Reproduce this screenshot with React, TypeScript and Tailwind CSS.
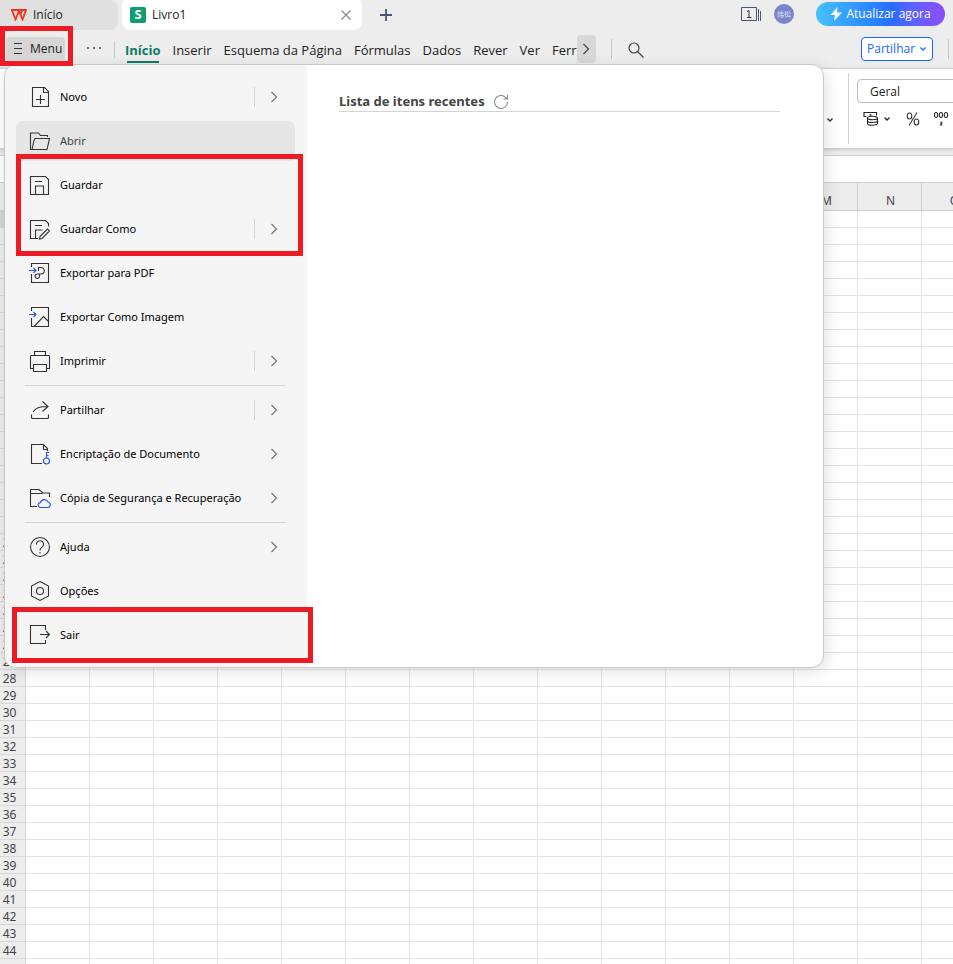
import type { ReactNode } from 'react';

const columns = 'ABCDEFGHIJKLMNO'.split('');
const rows = Array.from({ length: 44 }, (_, i) => i + 1);
const ribbonTabs = ['Inserir', 'Esquema da Página', 'Fórmulas', 'Dados', 'Rever', 'Ver', 'Ferr'];

function Icon({ children }: { children: ReactNode }) {
  return (
    <svg className="w-5 h-5 shrink-0 overflow-visible" viewBox="0 0 20 20" fill="none" stroke="#333" strokeWidth={1.1} aria-hidden="true">
      {children}
    </svg>
  );
}

function Chevron({ className }: { className: string }) {
  return (
    <svg className={className} viewBox="0 0 8 12" fill="none" stroke="currentColor" strokeWidth={1.2} aria-hidden="true">
      <path d="M1.5 1 6.5 6l-5 5" />
    </svg>
  );
}

function Caret({ className }: { className: string }) {
  return (
    <svg className={className} viewBox="0 0 6 4" fill="none" stroke="currentColor" strokeWidth={1.3} aria-hidden="true">
      <path d="M.5.5 3 3 5.5.5" />
    </svg>
  );
}

const icons = {
  novo: (
    <Icon>
      <path d="M2.5.5h12l4 4v15h-16zM13.5.5v5h5M10.5 8v9M6 12.5h9" />
    </Icon>
  ),
  abrir: (
    <Icon>
      <path d="M17.5 6V4.5h-7l-2-2.500h-8v16.500h16.500l2.500-11h-14.500l-1 2-2 9" />
    </Icon>
  ),
  guardar: (
    <Icon>
      <path d="M.5 1.5h15l3 3v15h-18zM5 6.5h7M5.5 19.5v-8.500h8v8.500" />
    </Icon>
  ),
  guardarComo: (
    <Icon>
      <path d="M8 19.5H.5v-18h15l3 3v3M5 6.5h7M5.5 19.5v-8.500h7M10 17.5l7.500-7.500 2 2-7.500 7.500-2.500.5z" />
    </Icon>
  ),
  pdf: (
    <Icon>
      <path d="M1.5 4V.5h17v19h-17v-8.500M8.5 8V4.500H11a3 3 0 0 1 0 6.500H7.500a2.200 2.200 0 1 0 2 2.200V11" />
      <path d="M-1 7.5h6.500M3.500 5 6 7.5 3.500 10" stroke="#2456e6" />
    </Icon>
  ),
  imagem: (
    <Icon>
      <path d="M1.5 4V.5h17v19h-17v-8.500M4 19.5l9.500-10 5 5" />
      <path d="M-1 7.5h6.500M3.500 5 6 7.5 3.500 10" stroke="#2456e6" />
    </Icon>
  ),
  imprimir: (
    <Icon>
      <path d="M4.5 4.5v-4h11v4M3.500 17.5h-3V5.5q0-1 1-1h17q1 0 1 1v12h-3M3.500 13.5h13v7h-13z" />
    </Icon>
  ),
  partilhar: (
    <Icon>
      <path d="M1.5 14.5v3q0 1 1 1h15q1 0 1-1v-3M3 12C5.5 8 9 6.5 18 6.5M12.5 1.5l5.500 5-5.500 5" />
    </Icon>
  ),
  encriptar: (
    <Icon>
      <path d="M12 19.5H1.5V.5h12l4 4V7M13.5.5v5h4" />
      <path d="M16.5 14V8.5h2.500M16.5 11.5h2" stroke="#2456e6" />
      <circle cx="16.5" cy="17" r="3" stroke="#2456e6" />
    </Icon>
  ),
  copia: (
    <Icon>
      <path d="M7 18.5H.5v-17H9l4 3.500h6.500V9M.5 5.5h12" />
      <path d="M11 19.5a2.500 2.500 0 0 1-.5-5 4 4 0 0 1 7.500-.5 2.800 2.800 0 0 1 0 5.500z" stroke="#2456e6" />
    </Icon>
  ),
  ajuda: (
    <Icon>
      <circle cx="10" cy="10" r="9.500" />
      <path d="M6.500 7.5a3.500 3.500 0 1 1 5.500 2.600Q10 11.500 10 13.500M10 15v1.500" />
    </Icon>
  ),
  opcoes: (
    <Icon>
      <path d="m10 .5 8.500 4.500v10l-8.500 4.500-8.500-4.500V5z" />
      <circle cx="10" cy="10" r="3.500" />
    </Icon>
  ),
  sair: (
    <Icon>
      <path d="M15.5 5V.5H.5v18h15V15M10 9.5h9.500M16 6l3.500 3.500L16 13" />
    </Icon>
  ),
};

type ItemProps = { icon: ReactNode; label: string; arrow?: boolean; split?: boolean; active?: boolean };

function MenuItem({ icon, label, arrow, split, active }: ItemProps) {
  return (
    <button className={`flex items-center w-full h-10 pl-3.5 pr-[17px] rounded-md text-left ${active ? 'bg-[#e6e6e6] text-[#444]' : 'text-black'}`}>
      {icon}
      <span className="ml-2.5 flex-1 whitespace-nowrap">{label}</span>
      {split && <span className="w-px h-5 bg-[#d4d4d4] mr-[15px]" />}
      {(arrow || split) && <Chevron className="w-2 h-3 text-[#777]" />}
    </button>
  );
}

function Divider() {
  return <hr className="mx-[9px] border-0 h-px bg-[#d4d4d4]" />;
}

function TitleBar() {
  return (
    <header className="flex items-start h-[30px] text-[12px] text-[#222]">
      <button className="flex items-center gap-1.5 w-[118px] h-[30px] pl-[11px] bg-[#e0e0e0] rounded-r-lg">
        <svg className="w-4 h-3" viewBox="0 0 16 12" fill="none" stroke="#f5331e" strokeWidth={1.8} aria-hidden="true">
          <path d="M0 1h11.5L9.5 5.5M1 1l3.500 9.500L8 2l3.500 8.500L15 1H12" />
        </svg>
        Início
      </button>
      <div className="flex items-center w-60 h-[30px] ml-1 px-2 bg-white rounded-b-lg rounded-t-sm">
        <span className="flex items-center justify-center w-4 h-4 rounded-xs bg-[#0e9d6b] text-white text-[13px] font-bold">S</span>
        <span className="ml-1.5 flex-1">Livro1</span>
        <button aria-label="Fechar separador">
          <svg className="w-2.5 h-2.5 mr-[3px]" viewBox="0 0 10 10" stroke="#888" strokeWidth={1.1} aria-hidden="true">
            <path d="m.5.5 9 9m0-9-9 9" />
          </svg>
        </button>
      </div>
      <button aria-label="Novo separador" className="ml-[18px] mt-[9px]">
        <svg className="w-3 h-3" viewBox="0 0 12 12" stroke="#4a5676" strokeWidth={1.8} aria-hidden="true">
          <path d="M6 0v12M0 6h12" />
        </svg>
      </button>
      <div className="flex items-start ml-auto pr-2">
        <button aria-label="Janelas" className="mt-[7px]">
          <svg className="w-5 h-3.5" viewBox="0 0 20 14" fill="none" stroke="#4a5676" aria-hidden="true">
            <path d="M.5.5h15v13H.5zM17.5 2v12M19.5 4v10" />
            <path d="m6 4.500 2-1v7M6 10.500h4.500" stroke="#333" />
          </svg>
        </button>
        <button className="flex items-center justify-center w-5 h-5 ml-[13px] mt-1 rounded-full bg-[#7986cb] text-white/80 text-[7px] font-['Noto_Sans_CJK_SC',sans-serif]">炜彸</button>
        <button className="flex items-center justify-center gap-1 w-[129px] h-6 ml-[22px] mt-0.5 rounded-full text-white whitespace-nowrap bg-linear-to-r from-[#48c1ff] via-[#286bff] via-60% to-[#8b4dff]">
          <svg className="w-3 h-3.5" viewBox="0 0 12 14" fill="currentColor" aria-hidden="true">
            <path d="M7.5 0 .5 8h4.500l-1 6 8-8.500H7z" />
          </svg>
          Atualizar agora
        </button>
      </div>
    </header>
  );
}

function RibbonTabs() {
  return (
    <nav className="flex items-start h-[38px] pl-1.5 text-[13px] text-[#222] whitespace-nowrap">
      <div className="relative z-20 mt-[7px]">
        <button className="flex items-center gap-2 w-[59px] h-6 pl-2 rounded bg-[#d6d6d6] text-[12px]">
          <svg className="w-2 h-3 shrink-0" viewBox="0 0 8 12" stroke="#333" aria-hidden="true">
            <path d="M0 .5h8M0 5.5h8M0 10.5h8" />
          </svg>
          Menu
        </button>
        <span className="absolute -left-1.5 -right-2 -top-[11px] -bottom-[5px] border-5 border-[#ed1c24] pointer-events-none" />
      </div>
      <button aria-label="Mais" className="flex items-center gap-1 h-5 mt-2 ml-[22px]">
        <i className="w-0.5 h-0.5 rounded-full bg-[#444]" />
        <i className="w-0.5 h-0.5 rounded-full bg-[#444]" />
        <i className="w-0.5 h-0.5 rounded-full bg-[#444]" />
      </button>
      <span className="w-px h-[17px] mt-[11px] ml-[13px] bg-[#c8c8c8]" />
      <button className="relative ml-2.5 mt-[9px] h-6 text-[#0a7d62] font-bold">
        Início
        <span className="absolute inset-x-0.5 bottom-0 h-0.5 bg-[#0a7d62]" />
      </button>
      {ribbonTabs.map((tab) => (
        <button key={tab} className="ml-3 mt-[9px] h-6">{tab}</button>
      ))}
      <button aria-label="Mais separadores" className="flex items-center justify-center w-[19px] h-7 mt-[5px] rounded bg-[#d8d8d8]">
        <Chevron className="w-2 h-3 text-[#444]" />
      </button>
      <span className="w-px h-5 mt-[9px] ml-[15px] bg-[#c8c8c8]" />
      <button aria-label="Procurar" className="ml-4 mt-3">
        <svg className="w-4 h-4" viewBox="0 0 16 16" fill="none" stroke="#444" strokeWidth={1.2} aria-hidden="true">
          <circle cx="6" cy="6" r="5" />
          <path d="m9.500 9.500 6 6" />
        </svg>
      </button>
      <button className="flex items-center justify-between w-[72px] h-6 mt-[7px] ml-auto pl-[5px] pr-1.5 bg-white border border-[#1a66ff] rounded text-[12px] text-[#1a66ff]">
        Partilhar
        <Caret className="w-1.5 h-1" />
      </button>
      <span className="w-px h-5 mt-[9px] ml-[15px] mr-1 bg-[#c8c8c8]" />
    </nav>
  );
}

function Toolbar() {
  return (
    <div className="relative flex justify-end h-[81px] bg-white border-y border-[#cfcfcf] shadow-[0_1px_3px_rgba(0,0,0,0.15)] text-[12px]">
      <button aria-label="Mais opções" className="flex items-center h-4 mt-[43px] mr-[15px]">
        <Caret className="w-1.5 h-1 text-[#333]" />
      </button>
      <div className="w-[105px] h-[71px] mt-1 border-l border-[#d4d4d4] pl-2 overflow-hidden">
        <input aria-label="Formato numérico" defaultValue="Geral" className="block w-32 h-6 mt-1.5 pl-3 border border-[#bbb] rounded bg-white text-[#222]" />
        <div className="flex items-center h-6 mt-1 pl-[7px] text-[#222]">
          <button aria-label="Moeda" className="flex items-center gap-1.5">
            <svg className="w-3.5 h-3.5 overflow-visible" viewBox="0 0 14 14" fill="none" stroke="#222" strokeWidth={1.1} aria-hidden="true">
              <path d="M2.500 4.500H0V.5h12.500v3" />
              <ellipse cx="8.500" cy="6" rx="5" ry="1.700" />
              <path d="M3.500 6v5.500c0 2.300 10 2.300 10 0V6M3.500 8.700c0 2.300 10 2.300 10 0" />
              <circle cx="6.500" cy="3" r=".4" />
            </svg>
            <Caret className="w-1.5 h-1" />
          </button>
          <button aria-label="Percentagem" className="ml-4">
            <svg className="w-3.5 h-3.5" viewBox="0 0 14 14" fill="none" stroke="#333" strokeWidth={1.1} aria-hidden="true">
              <ellipse cx="3.500" cy="4" rx="2.300" ry="3" />
              <ellipse cx="10.500" cy="10" rx="2.300" ry="3" />
              <path d="M11 .5 3 13.500" />
            </svg>
          </button>
          <button aria-label="Separador de milhares" className="ml-[13px]">
            <svg className="w-4 h-3.5" viewBox="0 0 16 14" fill="none" stroke="#333" strokeWidth={1.1} aria-hidden="true">
              <ellipse cx="3" cy="3" rx="1.700" ry="2.500" />
              <ellipse cx="8" cy="3" rx="1.700" ry="2.500" />
              <ellipse cx="13" cy="3" rx="1.700" ry="2.500" />
              <path d="M7.500 10.500h1v1.500l-1 1.500" strokeWidth={1.6} />
            </svg>
          </button>
        </div>
      </div>
    </div>
  );
}

function Sheet() {
  return (
    <table className="table-fixed w-[986px] border-separate border-spacing-0 text-[12px] leading-4 text-[#444] font-['Noto_Sans',sans-serif]">
      <thead>
        <tr className="h-7 bg-[#ededed]">
          <th aria-label="Selecionar tudo" className="w-[26px] p-0 border-r border-b border-[#cfcfcf]" />
          {columns.map((c) => (
            <th key={c} scope="col" className="w-16 p-0 pt-2 pl-0.5 font-normal border-r border-b border-[#cfcfcf]">{c}</th>
          ))}
        </tr>
      </thead>
      <tbody>
        {rows.map((n) => (
          <tr key={n} className="h-[17px]">
            <th scope="row" className={`p-0 pt-0.5 pr-1.5 font-normal leading-[14px] border-r border-b border-[#d8d8d8] ${n === 1 ? 'bg-[#d4d4d4]' : 'bg-[#ededed]'}`}>{n}</th>
            {columns.map((c) => (
              <td key={c} className="p-0 border-r border-b border-[#e3e3e3] bg-white" />
            ))}
          </tr>
        ))}
        {/* partly scrolled-out row */}
        <tr className="h-[17px]">
          <td className="p-0 border-r border-[#d8d8d8] bg-[#ededed]" />
          {columns.map((c) => (
            <td key={c} className="p-0 border-r border-[#e3e3e3] bg-white" />
          ))}
        </tr>
      </tbody>
    </table>
  );
}

function FileMenu() {
  return (
    <div className="absolute z-10 left-1 top-16 flex w-[820px] max-w-full h-[604px] rounded-xl border border-[#c8c8c8] bg-white shadow-[2px_4px_16px_rgba(0,0,0,0.12)] text-[11px] font-['Noto_Sans',sans-serif]">
      <div className="flex flex-col gap-1 w-[302px] shrink-0 pt-3 pl-[11px] pr-3 rounded-l-xl bg-[#f5f5f5]">
        <MenuItem icon={icons.novo} label="Novo" split />
        <MenuItem icon={icons.abrir} label="Abrir" active />
        <div className="relative flex flex-col gap-1">
          <MenuItem icon={icons.guardar} label="Guardar" />
          <MenuItem icon={icons.guardarComo} label="Guardar Como" split />
          <span className="absolute left-0 -right-2 -top-[11px] -bottom-[7px] border-5 border-[#ed1c24] pointer-events-none" />
        </div>
        <MenuItem icon={icons.pdf} label="Exportar para PDF" />
        <MenuItem icon={icons.imagem} label="Exportar Como Imagem" />
        <MenuItem icon={icons.imprimir} label="Imprimir" split />
        <Divider />
        <MenuItem icon={icons.partilhar} label="Partilhar" split />
        <MenuItem icon={icons.encriptar} label="Encriptação de Documento" arrow />
        <MenuItem icon={icons.copia} label="Cópia de Segurança e Recuperação" arrow />
        <Divider />
        <MenuItem icon={icons.ajuda} label="Ajuda" arrow />
        <MenuItem icon={icons.opcoes} label="Opções" />
        <div className="relative">
          <MenuItem icon={icons.sair} label="Sair" />
          <span className="absolute -left-1 -right-[18px] -inset-y-2 border-5 border-[#ed1c24] pointer-events-none" />
        </div>
      </div>
      <section className="flex-1 pl-8 pr-[43px] pt-[27px]">
        <div className="flex items-center gap-2 h-5 border-b border-[#d4d4d4]">
          <h2 className="text-[13px] font-bold text-[#444]">Lista de itens recentes</h2>
          <button aria-label="Atualizar lista">
            <svg className="w-4 h-4" viewBox="0 0 16 16" fill="none" stroke="#888" strokeWidth={1.1} aria-hidden="true">
              <path d="M14.500 8A6.500 6.500 0 1 1 12.500 3.300L14.500 5M14.500 1v4h-4" />
            </svg>
          </button>
        </div>
      </section>
    </div>
  );
}

export default function App() {
  return (
    <div className="relative h-screen overflow-hidden bg-[#ededed] font-['Open_Sans','Noto_Sans',sans-serif]">
      <TitleBar />
      <RibbonTabs />
      <Toolbar />
      <input aria-label="Barra de fórmulas" className="block w-full h-7 mt-1.5 bg-white border-y border-[#cfcfcf]" />
      <Sheet />
      <FileMenu />
    </div>
  );
}
